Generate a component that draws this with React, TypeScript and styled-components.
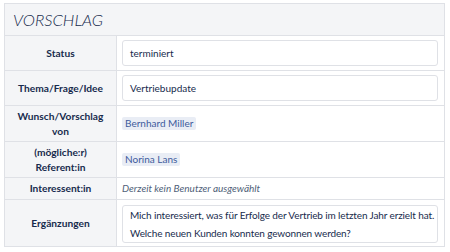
import React from 'react';
import styled, { createGlobalStyle } from 'styled-components';

const GlobalStyle = createGlobalStyle`
  body {
    margin: 0;
    background: #ffffff;
    font-family: 'Lato', 'Noto Sans', sans-serif;
    color: #172b4d;
  }
`;

const Page = styled.div`
  padding: 3px 5px 0 4px;
`;

const Table = styled.table`
  width: 441px;
  table-layout: fixed;
  border-collapse: collapse;
  border: 1px solid #dfe1e6;
  font-size: 10px;
`;

const LabelCol = styled.col`
  width: 112px;
`;

const TitleCell = styled.th`
  background: #f4f5f7;
  border: 1px solid #dfe1e6;
  height: 31px;
  padding: 0 0 0 8px;
  text-align: left;
  font-size: 16.5px;
  font-weight: 300;
  font-style: italic;
  color: #172b4d;
`;

const Label = styled.th`
  background: #f4f5f7;
  border: 1px solid #dfe1e6;
  font-weight: 700;
  font-size: 10.2px;
  text-align: center;
  padding: 0 4px;
  line-height: 15px;
  color: #172b4d;
`;

const Value = styled.td<{ $h: number }>`
  height: ${(p) => p.$h}px;
  border: 1px solid #dfe1e6;
  padding: 0 6px 0 5px;
  vertical-align: middle;
  line-height: 15px;
`;

const Field = styled.div`
  border: 1px solid #dfe1e6;
  border-radius: 3px;
  padding: 0 7px;
  height: 24px;
  display: flex;
  align-items: center;
  background: #fff;
`;

const Area = styled.div`
  border: 1px solid #dfe1e6;
  border-radius: 3px;
  padding: 0 7px;
  line-height: 18px;
  background: #fff;
  margin-top: 1px;
  letter-spacing: -0.12px;
  white-space: nowrap;
  overflow: hidden;
`;

const Chip = styled.span`
  display: inline-block;
  background: #e9edf5;
  color: #3d5b9c;
  border-radius: 2px;
  padding: 0 3px;
  line-height: 13px;
`;

const Empty = styled.span`
  font-style: italic;
  color: #505f79;
`;

export default function App() {
  return (
    <>
      <GlobalStyle />
      <Page>
        <Table>
          <colgroup>
            <LabelCol />
            <col />
          </colgroup>
          <tbody>
            <tr>
              <TitleCell colSpan={2}>VORSCHLAG</TitleCell>
            </tr>
            <tr>
              <Label>Status</Label>
              <Value $h={34}>
                <Field>terminiert</Field>
              </Value>
            </tr>
            <tr>
              <Label>Thema/Frage/Idee</Label>
              <Value $h={34}>
                <Field>Vertriebupdate</Field>
              </Value>
            </tr>
            <tr>
              <Label>
                Wunsch/Vorschlag
                <br />
                von
              </Label>
              <Value $h={35}>
                <Chip>Bernhard Miller</Chip>
              </Value>
            </tr>
            <tr>
              <Label>
                (mögliche:r)
                <br />
                Referent:in
              </Label>
              <Value $h={35}>
                <Chip>Norina Lans</Chip>
              </Value>
            </tr>
            <tr>
              <Label>Interessent:in</Label>
              <Value $h={21}>
                <Empty>Derzeit kein Benutzer ausgewählt</Empty>
              </Value>
            </tr>
            <tr>
              <Label>Ergänzungen</Label>
              <Value $h={46}>
                <Area>
                  Mich interessiert, was für Erfolge der Vertrieb im letzten Jahr erzielt hat.
                  <br />
                  Welche neuen Kunden konnten gewonnen werden?
                </Area>
              </Value>
            </tr>
          </tbody>
        </Table>
      </Page>
    </>
  );
}
